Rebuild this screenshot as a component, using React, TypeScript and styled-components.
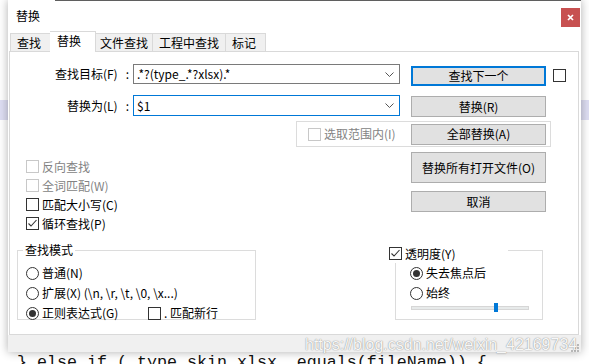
import React from 'react'
import styled, { createGlobalStyle } from 'styled-components'

const UI_FONT = '"Noto Sans CJK SC", "Noto Sans", "Liberation Sans", sans-serif'

const GlobalStyle = createGlobalStyle`
  * { box-sizing: border-box; }
  html, body { margin: 0; padding: 0; }
  body {
    width: 589px;
    height: 364px;
    overflow: hidden;
    background: #fff;
    font-family: ${UI_FONT};
    font-size: 12px;
    color: #000;
  }
`

const Desktop = styled.div`
  position: relative;
  width: 589px;
  height: 364px;
  overflow: hidden;
  background: #fff;
`

const Editor = styled.div`
  padding-top: 100px;
`

const HighlightLine = styled.div`
  height: 20px;
  background: #dedef3;
`

const CodeLine = styled.div`
  margin-top: 233px;
  padding-left: 17px;
  font-family: 'Liberation Mono', monospace;
  font-size: 16.67px;
  line-height: 20px;
  white-space: pre;
  color: #111;
`

const Dialog = styled.div`
  position: absolute;
  top: 0;
  left: 8px;
  width: 573px;
  height: 352px;
  background: #fff;
  box-shadow: 0 0 9px rgba(0, 0, 0, 0.32);
  display: flex;
  flex-direction: column;
`

const TitleBar = styled.div`
  height: 31px;
  flex: none;
  display: flex;
  align-items: flex-start;
  padding-left: 8px;
  background: linear-gradient(to right, transparent 47px, #5f5f5f 47px) top / 100% 1px no-repeat;
`

const Title = styled.div`
  margin-top: 8px;
  line-height: 16px;
`

const CloseButton = styled.div`
  margin-left: auto;
  margin-right: 1px;
  margin-top: 8px;
  width: 19px;
  height: 19px;
  background: #c75050;
  display: flex;
  align-items: center;
  justify-content: center;
`

const TabBar = styled.div`
  height: 20px;
  flex: none;
  display: flex;
  align-items: flex-end;
  padding-left: 2px;
`

const Tab = styled.div<{ $w: number; $active?: boolean }>`
  position: relative;
  width: ${p => (p.$active ? p.$w + 4 : p.$w)}px;
  height: ${p => (p.$active ? 21 : 18)}px;
  margin: ${p => (p.$active ? '0 -2px -1px' : '0')};
  z-index: ${p => (p.$active ? 2 : 1)};
  padding-left: ${p => (p.$active ? 7 : 6)}px;
  padding-bottom: ${p => (p.$active ? 2 : 0)}px;
  display: flex;
  align-items: center;
  white-space: nowrap;
  line-height: 16px;
  background: ${p => (p.$active ? '#fff' : '#f0f0f0')};
  border: 1px solid #d9d9d9;
  border-bottom: none;
  & + & {
    border-left: ${p => (p.$active ? '1px solid #d9d9d9' : 'none')};
  }
`

const Panel = styled.div`
  margin-left: 1px;
  width: 570px;
  height: 284px;
  flex: none;
  border: 1px solid #d9d9d9;
  background: #fff;
  display: flex;
  flex-direction: column;
`

const Footer = styled.div`
  flex: 1;
  background: #f0f0f0;
  display: flex;
  justify-content: flex-end;
  align-items: flex-end;
  padding: 0 2px 0 0;
`

const Watermark = styled.div`
  position: absolute;
  left: 305px;
  top: 336px;
  font-family: 'Liberation Sans', Arial, sans-serif;
  font-size: 16px;
  line-height: 18px;
  white-space: nowrap;
  color: rgba(255, 255, 255, 0.95);
  text-shadow: 0 0 1px rgba(0, 0, 0, 0.45), 0 0 2px rgba(0, 0, 0, 0.15);
`

/* ---- form rows ---- */

const TopSection = styled.div`
  height: 95px;
  flex: none;
  padding-top: 12px;
  display: flex;
  flex-direction: column;
`

const FieldRow = styled.div<{ $mt?: number }>`
  display: flex;
  align-items: flex-start;
  margin-top: ${p => p.$mt ?? 0}px;
`

const FieldLabel = styled.label<{ $h: number }>`
  width: 120px;
  height: ${p => p.$h}px;
  display: flex;
  align-items: center;
  justify-content: flex-end;
  white-space: nowrap;
  line-height: 16px;
`

const Colon = styled.span`
  margin-left: 8px;
  margin-right: 1px;
`

const ComboBox = styled.div<{ $focused?: boolean; $h: number }>`
  margin-left: 3px;
  width: 267px;
  height: ${p => p.$h}px;
  border: 1px solid ${p => (p.$focused ? '#0078d7' : '#7a7a7a')};
  background: #fff;
  display: flex;
  align-items: center;
  padding: 0 5px 0 3px;
  line-height: 16px;
  white-space: nowrap;
`

const Chevron = styled.svg`
  margin-left: auto;
  flex: none;
`

const Button = styled.div<{ $h?: number; $focused?: boolean; $ml?: number; $mt?: number; $mr?: number; $push?: boolean }>`
  flex: none;
  width: 135px;
  height: ${p => p.$h ?? 21}px;
  margin-left: ${p => (p.$push ? 'auto' : `${p.$ml ?? 0}px`)};
  margin-top: ${p => p.$mt ?? 0}px;
  margin-right: ${p => p.$mr ?? 0}px;
  border: ${p => (p.$focused ? '2px solid #0078d7' : '1px solid #adadad')};
  background: #e1e1e1;
  display: flex;
  align-items: center;
  justify-content: center;
  line-height: 16px;
  white-space: nowrap;
`

const SelectionGroup = styled.div`
  margin-top: 4px;
  margin-left: 286px;
  width: 255px;
  height: 29px;
  border: 1px solid #dcdcdc;
  display: flex;
  align-items: center;
  padding-left: 11px;
`

const MiddleSection = styled.div`
  height: 96px;
  flex: none;
  display: flex;
`

const OptionList = styled.div`
  display: flex;
  flex-direction: column;
  padding: 10px 0 0 16px;
`

const ActionColumn = styled.div`
  margin-left: auto;
  margin-right: 32px;
  padding-top: 5px;
  display: flex;
  flex-direction: column;
  gap: 8px;
`

const BottomSection = styled.div`
  flex: 1;
  display: flex;
  align-items: flex-start;
  padding-top: 7px;
`

const GroupBox = styled.div<{ $ml: number; $w: number; $pl: number }>`
  position: relative;
  margin-left: ${p => p.$ml}px;
  width: ${p => p.$w}px;
  height: 70px;
  border: 1px solid #dcdcdc;
  padding: 12px 0 0 ${p => p.$pl}px;
  display: flex;
  flex-direction: column;
`

const Legend = styled.span`
  position: absolute;
  top: -8px;
  left: 5px;
  padding: 0 2px;
  background: #fff;
  line-height: 14px;
  white-space: nowrap;
`

const CheckLegend = styled.div`
  position: absolute;
  top: -7px;
  left: -7px;
  width: 119px;
  height: 19px;
  background: #fff;
  display: flex;
  align-items: center;
`

const Option = styled.div<{ $h?: number; $w?: number; $disabled?: boolean }>`
  height: ${p => p.$h ?? 19}px;
  width: ${p => (p.$w ? `${p.$w}px` : 'auto')};
  flex: none;
  display: flex;
  align-items: center;
  white-space: nowrap;
  line-height: 16px;
  color: ${p => (p.$disabled ? '#838383' : '#000')};
`

const OptionRow = styled.div`
  display: flex;
  align-items: center;
`

const OptionText = styled.span`
  margin-left: 3px;
`

const CheckBox = styled.span<{ $disabled?: boolean }>`
  flex: none;
  width: 13px;
  height: 13px;
  border: 1px solid ${p => (p.$disabled ? '#c8c8c8' : '#333')};
  background: #fff;
  display: flex;
  align-items: center;
  justify-content: center;
`

const RadioCircle = styled.span`
  flex: none;
  width: 13px;
  height: 13px;
  border: 1px solid #333;
  border-radius: 50%;
  background: #fff;
  display: flex;
  align-items: center;
  justify-content: center;
`

const RadioDot = styled.span`
  width: 7px;
  height: 7px;
  border-radius: 50%;
  background: #333;
`

const Slider = styled.div`
  position: relative;
  margin-left: 1px;
  width: 118px;
  height: 9px;
  display: flex;
  align-items: center;
`

const Track = styled.div`
  width: 100%;
  height: 4px;
  background: #e7eaea;
  border: 1px solid #d6d6d6;
`

const Thumb = styled.div`
  position: absolute;
  top: 0;
  width: 4px;
  height: 9px;
  background: #0078d7;
`

const TopCheck = styled(CheckBox)`
  margin-left: 7px;
  margin-top: 5px;
`

const Check: React.FC<{ checked?: boolean; disabled?: boolean }> = ({ checked, disabled }) => (
  <CheckBox $disabled={disabled}>
    {checked && (
      <svg width="11" height="11" viewBox="0 0 11 11">
        <path d="M1.5 5.5 L4 8 L9.5 2" fill="none" stroke="#333" strokeWidth="1.1" />
      </svg>
    )}
  </CheckBox>
)

const Radio: React.FC<{ checked?: boolean }> = ({ checked }) => (
  <RadioCircle>{checked && <RadioDot />}</RadioCircle>
)

const CheckOption: React.FC<{ label: string; checked?: boolean; disabled?: boolean; w?: number }> = ({
  label,
  checked,
  disabled,
  w
}) => (
  <Option $disabled={disabled} $w={w}>
    <Check checked={checked} disabled={disabled} />
    <OptionText>{label}</OptionText>
  </Option>
)

const RadioOption: React.FC<{ label: string; checked?: boolean; w?: number }> = ({ label, checked, w }) => (
  <Option $h={20} $w={w}>
    <Radio checked={checked} />
    <OptionText>{label}</OptionText>
  </Option>
)

const DropArrow = () => (
  <Chevron width="9" height="5" viewBox="0 0 9 5">
    <path d="M0.5 0.5 L4.5 4.5 L8.5 0.5" fill="none" stroke="#555" strokeWidth="1" />
  </Chevron>
)

const tabs = [
  { label: '查找', w: 42 },
  { label: '替换', w: 42, active: true },
  { label: '文件查找', w: 59 },
  { label: '工程中查找', w: 73 },
  { label: '标记', w: 40 }
]

const opacity = 0.7

const App: React.FC = () => {
  return (
    <Desktop>
      <GlobalStyle />
      <Editor>
        <HighlightLine />
        <CodeLine>{'} else if ( type_skin.xlsx .equals(fileName)) {'}</CodeLine>
      </Editor>

      <Dialog>
        <TitleBar>
          <Title>替换</Title>
          <CloseButton>
            <svg width="19" height="19" viewBox="0 0 19 19">
              <path d="M7 7 L12 12 M12 7 L7 12" stroke="#fff" strokeWidth="1.7" />
            </svg>
          </CloseButton>
        </TitleBar>

        <TabBar>
          {tabs.map(t => (
            <Tab key={t.label} $w={t.w} $active={t.active}>
              {t.label}
            </Tab>
          ))}
        </TabBar>

        <Panel>
          <TopSection>
            <FieldRow>
              <FieldLabel $h={20}>
                查找目标(F)<Colon>:</Colon>
              </FieldLabel>
              <ComboBox $h={20}>
                .*?(type_.*?xlsx).*
                <DropArrow />
              </ComboBox>
              <Button $h={20} $focused $ml={11} $mt={2}>
                查找下一个
              </Button>
              <TopCheck />
            </FieldRow>
            <FieldRow $mt={9}>
              <FieldLabel $h={21}>
                替换为(L)<Colon>:</Colon>
              </FieldLabel>
              <ComboBox $h={21} $focused>
                $1
                <DropArrow />
              </ComboBox>
              <Button $ml={11} $mt={1}>
                替换(R)
              </Button>
            </FieldRow>
            <SelectionGroup>
              <CheckOption label="选取范围内(I)" disabled />
              <Button $push $mr={4}>
                全部替换(A)
              </Button>
            </SelectionGroup>
          </TopSection>

          <MiddleSection>
            <OptionList>
              <CheckOption label="反向查找" disabled />
              <CheckOption label="全词匹配(W)" disabled />
              <CheckOption label="匹配大小写(C)" />
              <CheckOption label="循环查找(P)" checked />
            </OptionList>
            <ActionColumn>
              <Button $h={31}>替换所有打开文件(O)</Button>
              <Button>取消</Button>
            </ActionColumn>
          </MiddleSection>

          <BottomSection>
            <GroupBox $ml={7} $w={239} $pl={8}>
              <Legend>查找模式</Legend>
              <RadioOption label="普通(N)" />
              <RadioOption label={'扩展(X) (\\n, \\r, \\t, \\0, \\x...)'} />
              <OptionRow>
                <RadioOption label="正则表达式(G)" checked w={122} />
                <CheckOption label=". 匹配新行" />
              </OptionRow>
            </GroupBox>

            <GroupBox $ml={139} $w={148} $pl={14}>
              <CheckLegend>
                <Check checked />
                <OptionText>透明度(Y)</OptionText>
              </CheckLegend>
              <RadioOption label="失去焦点后" checked />
              <RadioOption label="始终" />
              <Slider>
                <Track />
                <Thumb style={{ left: `${Math.round(opacity * 118)}px` }} />
              </Slider>
            </GroupBox>
          </BottomSection>
        </Panel>

        <Footer>
          <svg width="8" height="8" viewBox="0 0 8 8">
            <rect x="6" y="0" width="2" height="2" fill="#b8b8b8" />
            <rect x="3" y="3" width="2" height="2" fill="#b8b8b8" />
            <rect x="6" y="3" width="2" height="2" fill="#b8b8b8" />
            <rect x="0" y="6" width="2" height="2" fill="#b8b8b8" />
            <rect x="3" y="6" width="2" height="2" fill="#b8b8b8" />
            <rect x="6" y="6" width="2" height="2" fill="#b8b8b8" />
          </svg>
        </Footer>
      </Dialog>

      <Watermark>https://blog.csdn.net/weixin_42169734</Watermark>
    </Desktop>
  )
}

export default App
